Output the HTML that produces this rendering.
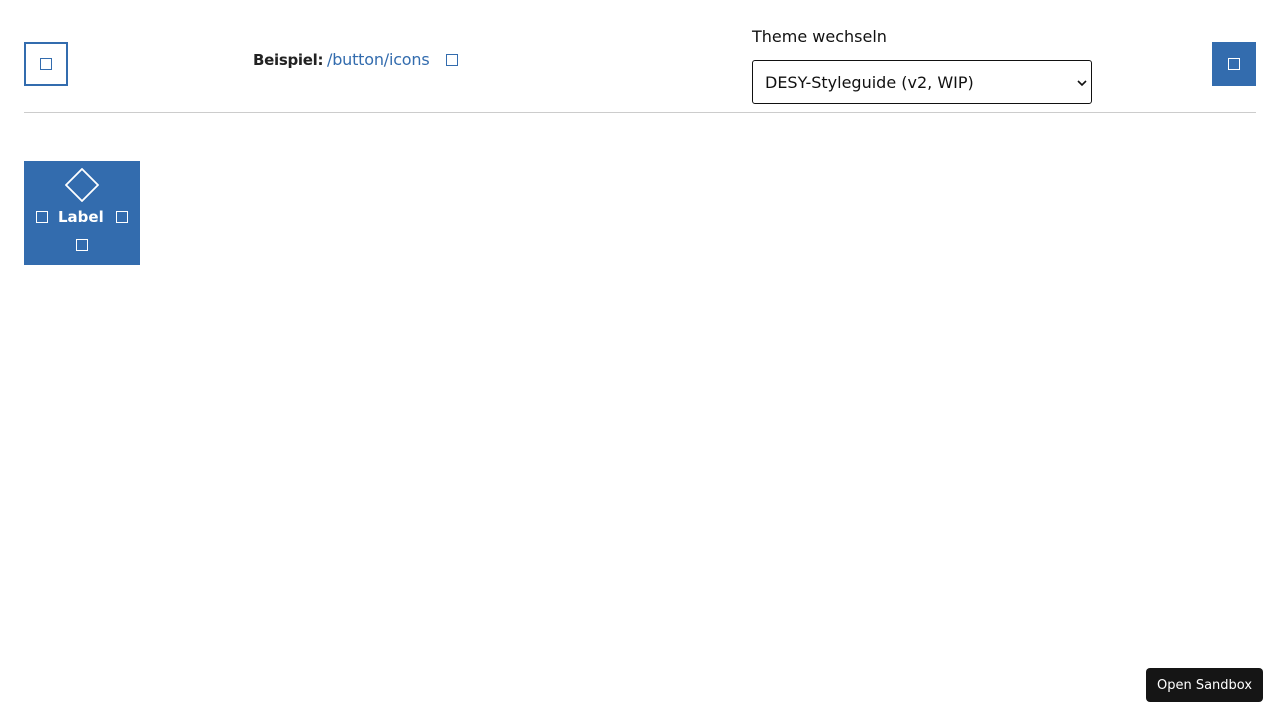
<!DOCTYPE html>
<html><head><meta charset="utf-8"><style>
*{box-sizing:border-box}
body{margin:0;width:1280px;height:720px;background:#fff;font-family:"DejaVu Sans","Liberation Sans",sans-serif;position:relative;overflow:hidden;color:#222}
.sq{position:absolute;border:1px solid currentColor;width:12px;height:12px}
.a{position:absolute}
</style></head><body>
<div class="a" style="left:24px;top:42px;width:44px;height:44px;border:2px solid #336cae"></div>
<div class="sq" style="left:40px;top:58px;color:#336cae"></div>
<div class="a" style="left:253px;top:51px;font-size:15px;font-weight:bold;color:#222;letter-spacing:-0.3px">Beispiel:</div>
<div class="a" style="left:327px;top:50px;font-size:16px;color:#336cae;letter-spacing:-0.2px">/button/icons</div>
<div class="sq" style="left:446px;top:54px;color:#336cae"></div>
<div class="a" style="left:752px;top:27px;font-size:16px;color:#111">Theme wechseln</div>
<div class="a" style="left:752px;top:60px;width:340px;height:44px;border:1px solid #111;border-radius:3px;padding:12px 12px;font-size:16px;color:#111">DESY-Styleguide (v2, WIP)
<svg style="position:absolute;right:4px;top:18px" width="10" height="8" viewBox="0 0 10 8"><path d="M1 2 L5 6 L9 2" fill="none" stroke="#111" stroke-width="1.6"/></svg></div>
<div class="a" style="left:1212px;top:42px;width:44px;height:44px;background:#336cae"></div>
<div class="sq" style="left:1228px;top:58px;color:#fff"></div>
<div class="a" style="left:24px;top:112px;width:1232px;height:1px;background:#ccc"></div>
<div class="a" style="left:24px;top:161px;width:116px;height:104px;background:#336cae"></div>
<svg class="a" style="left:65px;top:168px" width="34" height="34" viewBox="0 0 34 34"><path d="M17 1 L33 17 L17 33 L1 17 Z" fill="none" stroke="#fff" stroke-width="1.8"/></svg>
<div class="sq" style="left:36px;top:211px;color:#fff"></div>
<div class="a" style="left:58px;top:208px;font-size:15px;font-weight:bold;color:#fff">Label</div>
<div class="sq" style="left:116px;top:211px;color:#fff"></div>
<div class="sq" style="left:76px;top:239px;color:#fff"></div>
<div class="a" style="left:1146px;top:668px;width:117px;height:34px;background:#151515;border-radius:4px;color:#fff;font-size:13px;text-align:center;line-height:36px">Open Sandbox</div>
</body></html>
